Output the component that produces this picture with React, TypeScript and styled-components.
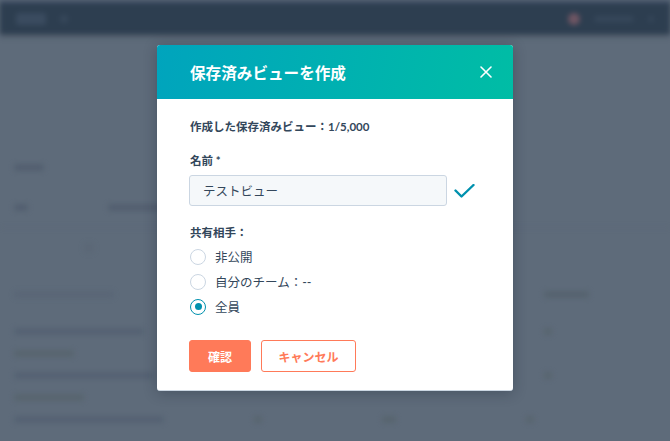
import styled, { createGlobalStyle } from 'styled-components';

const GlobalStyle = createGlobalStyle`
  html, body {
    margin: 0;
    padding: 0;
  }
  body {
    font-family: Lato, "Noto Sans CJK JP", sans-serif;
    background: #5e6b7a;
    overflow: hidden;
  }
`;

const Page = styled.div`
  position: relative;
  width: 670px;
  height: 441px;
  overflow: hidden;
  background: #5e6b7a;
`;

/* blurred page behind the dialog */
const Backdrop = styled.div`
  filter: blur(2.5px);
  height: 100%;
  display: flex;
  flex-direction: column;
`;

const TopNav = styled.div`
  height: 31px;
  border-top: 3px solid #45546a;
  background: #2d3e50;
  display: flex;
  align-items: center;
  justify-content: space-between;
  padding: 0 16px;
  box-shadow: 0 2px 4px rgba(20, 30, 40, 0.35);
`;

const NavGroup = styled.div`
  display: flex;
  align-items: center;
  gap: 14px;
`;

const Ghost = styled.div<{ $w: number; $h?: number; $c?: string }>`
  width: ${(p) => p.$w}px;
  height: ${(p) => p.$h ?? 7}px;
  background: ${(p) => p.$c ?? '#535f70'};
  border-radius: 3px;
`;

const Avatar = styled.div`
  width: 12px;
  height: 12px;
  border-radius: 50%;
  background: #6e5563;
`;

const Content = styled.div`
  flex: 1;
  display: flex;
  flex-direction: column;
  padding-top: 113px;
`;

const GhostRow = styled.div<{ $h: number; $line?: boolean }>`
  height: ${(p) => p.$h}px;
  display: flex;
  align-items: center;
  gap: 30px;
  padding-left: 14px;
  border-bottom: ${(p) => (p.$line ? '1px solid #59657347' : 'none')};
`;

const Spacer = styled.div<{ $w: number }>`
  width: ${(p) => p.$w}px;
`;

/* dialog */
const Overlay = styled.div`
  position: absolute;
  inset: 0;
  display: flex;
  align-items: center;
  justify-content: center;
  padding-bottom: 5px;
`;

const Modal = styled.div`
  width: 356px;
  background: #fff;
  border-radius: 3px;
  overflow: hidden;
  box-shadow: 0 2px 14px rgba(20, 30, 45, 0.3);
  border-bottom: 1px solid #cbd6e2;
`;

const Header = styled.div`
  height: 54px;
  display: flex;
  align-items: center;
  justify-content: space-between;
  padding: 0 20px 0 33px;
  background: linear-gradient(100deg, #00a4bd 0%, #00bda5 100%);
`;

const Title = styled.h1`
  margin: 0;
  font-size: 15.6px;
  font-weight: 700;
  color: #fff;
  letter-spacing: 0;
`;

const CloseButton = styled.button`
  border: 0;
  background: none;
  padding: 0;
  width: 14px;
  height: 14px;
  display: flex;
  align-items: center;
  justify-content: center;
  cursor: pointer;
`;

const Body = styled.div`
  padding: 20px 32px 18px 32px;
  color: #33475b;
`;

const Count = styled.div`
  font-size: 11.5px;
  font-weight: 700;
  line-height: 16px;
  padding-left: 1px;
`;

const FieldLabel = styled.div<{ $mt: number }>`
  margin-top: ${(p) => p.$mt}px;
  font-size: 11.5px;
  font-weight: 700;
  line-height: 16px;
  padding-left: 1px;
`;

const InputRow = styled.div`
  margin-top: 6px;
  display: flex;
  align-items: center;
  gap: 7px;
`;

const TextInput = styled.input`
  box-sizing: border-box;
  width: 258px;
  height: 31px;
  border: 1px solid #cbd6e2;
  border-radius: 3px;
  background: #f5f8fa;
  padding: 0 13px;
  font-family: Lato, "Noto Sans CJK JP", sans-serif;
  font-size: 12.5px;
  color: #33475b;
  outline: none;
`;

const RadioList = styled.div`
  margin-top: 3px;
  display: flex;
  flex-direction: column;
`;

const RadioRow = styled.label`
  height: 25px;
  display: flex;
  align-items: center;
  gap: 9px;
  font-size: 12.5px;
  color: #33475b;
  cursor: pointer;
`;

const RadioMark = styled.span<{ $checked?: boolean }>`
  box-sizing: border-box;
  width: 16px;
  height: 16px;
  margin-left: 1px;
  border-radius: 50%;
  border: ${(p) => (p.$checked ? '1.5px solid #0091ae' : '1px solid #cbd6e2')};
  background: #fff;
  display: flex;
  align-items: center;
  justify-content: center;
  &::after {
    content: '';
    width: 7px;
    height: 7px;
    border-radius: 50%;
    background: ${(p) => (p.$checked ? '#0091ae' : 'transparent')};
  }
`;

const Footer = styled.div`
  margin-top: 21px;
  display: flex;
  gap: 10px;
`;

const Button = styled.button<{ $primary?: boolean }>`
  box-sizing: border-box;
  height: 32px;
  width: ${(p) => (p.$primary ? 62 : 95)}px;
  border-radius: 3px;
  border: 1px solid #ff7a59;
  background: ${(p) => (p.$primary ? '#ff7a59' : '#fff')};
  color: ${(p) => (p.$primary ? '#fff' : '#ff7a59')};
  font-family: Lato, "Noto Sans CJK JP", sans-serif;
  font-size: 12px;
  font-weight: 700;
  cursor: pointer;
`;

const options = [
  { label: '非公開', checked: false },
  { label: '自分のチーム：--', checked: false },
  { label: '全員', checked: true },
];

export default function App() {
  return (
    <Page>
      <GlobalStyle />
      <Backdrop>
        <TopNav>
          <NavGroup>
            <Ghost $w={30} $h={12} $c="#3a4b5f" />
            <Ghost $w={8} $h={8} $c="#36475a" />
          </NavGroup>
          <NavGroup>
            <Avatar />
            <Ghost $w={40} $h={6} $c="#36475a" />
            <Ghost $w={6} $h={6} $c="#36475a" />
          </NavGroup>
        </TopNav>
        <Content>
          <GhostRow $h={40}>
            <Ghost $w={30} />
          </GhostRow>
          <GhostRow $h={40} $line>
            <Ghost $w={14} />
            <Spacer $w={20} />
            <Ghost $w={78} />
          </GhostRow>
          <GhostRow $h={40}>
            <Spacer $w={40} />
            <Ghost $w={10} $h={10} $c="#59667480" />
          </GhostRow>
          <GhostRow $h={52}>
            <Ghost $w={100} $c="#55627380" />
            <Spacer $w={370} />
            <Ghost $w={45} $c="#56636f" />
          </GhostRow>
          <GhostRow $h={22}>
            <Ghost $w={130} $c="#556273" />
            <Spacer $w={340} />
            <Ghost $w={8} $c="#58656f" />
          </GhostRow>
          <GhostRow $h={22}>
            <Ghost $w={60} $c="#58656f" />
          </GhostRow>
          <GhostRow $h={22}>
            <Ghost $w={140} $c="#556273" />
            <Spacer $w={330} />
            <Ghost $w={8} $c="#58656f" />
          </GhostRow>
          <GhostRow $h={22}>
            <Ghost $w={70} $c="#58656f" />
          </GhostRow>
          <GhostRow $h={22}>
            <Ghost $w={150} $c="#556273" />
            <Spacer $w={30} />
            <Ghost $w={8} $c="#58656f" />
            <Spacer $w={60} />
            <Ghost $w={14} $c="#58656f" />
            <Spacer $w={70} />
            <Ghost $w={8} $c="#58656f" />
          </GhostRow>
        </Content>
      </Backdrop>

      <Overlay>
        <Modal role="dialog" aria-label="保存済みビューを作成">
          <Header>
            <Title>保存済みビューを作成</Title>
            <CloseButton aria-label="閉じる">
              <svg width="12" height="12" viewBox="0 0 12 12">
                <path d="M1 1L11 11M11 1L1 11" stroke="#fff" strokeWidth="1.6" strokeLinecap="round" />
              </svg>
            </CloseButton>
          </Header>
          <Body>
            <Count>作成した保存済みビュー：1/5,000</Count>
            <FieldLabel $mt={18}>名前 *</FieldLabel>
            <InputRow>
              <TextInput defaultValue="テストビュー" />
              <svg width="21" height="14" viewBox="0 0 21 14">
                <path d="M1.5 6.5L7.5 12.5L19.5 1" fill="none" stroke="#0091ae" strokeWidth="2.4" strokeLinecap="round" strokeLinejoin="round" />
              </svg>
            </InputRow>
            <FieldLabel $mt={19}>共有相手：</FieldLabel>
            <RadioList>
              {options.map((o) => (
                <RadioRow key={o.label}>
                  <RadioMark $checked={o.checked} />
                  {o.label}
                </RadioRow>
              ))}
            </RadioList>
            <Footer>
              <Button $primary>確認</Button>
              <Button>キャンセル</Button>
            </Footer>
          </Body>
        </Modal>
      </Overlay>
    </Page>
  );
}
